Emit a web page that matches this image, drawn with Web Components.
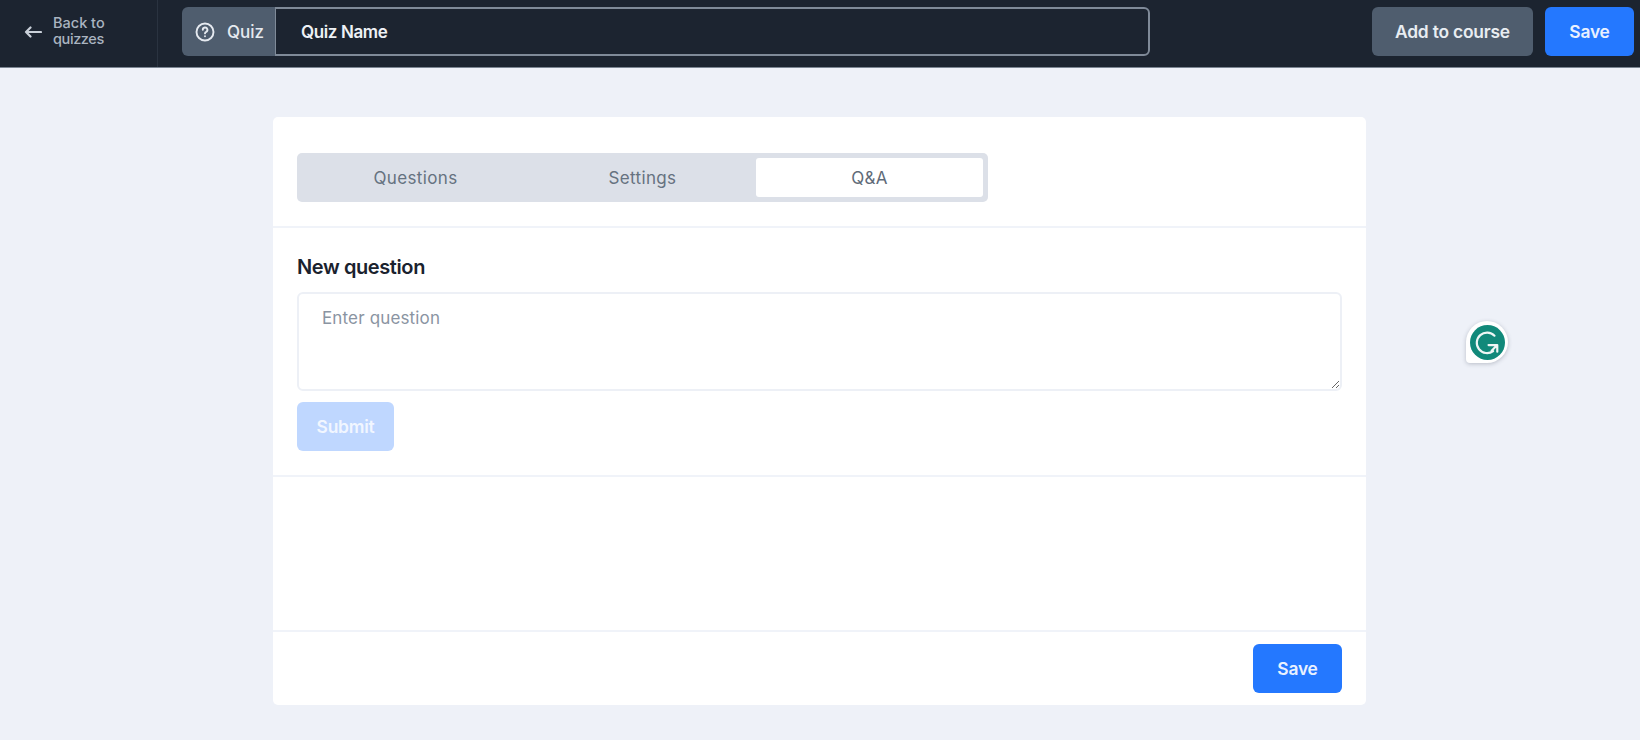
<!DOCTYPE html>
<html lang="en">
<head>
<meta charset="utf-8">
<title>Quiz</title>
<style>
html,body{margin:0;height:100%;background:#eef1f8;font-family:Inter,"Liberation Sans",sans-serif;overflow:hidden}
body{display:flex;flex-direction:column;height:740px;position:relative}
</style>
</head>
<body>
<quiz-header></quiz-header>
<quiz-page>
  <quiz-card>
    <card-section slot="tabs" pad="36px 24px 24px">
      <tab-bar>
        <tab-item>Questions</tab-item>
        <tab-item>Settings</tab-item>
        <tab-item active>Q&amp;A</tab-item>
      </tab-bar>
    </card-section>
    <card-section slot="form" pad="26px 24px 24px">
      <question-form></question-form>
    </card-section>
    <card-section slot="footer" pad="12px 24px 12px">
      <div style="display:flex;justify-content:flex-end"><ui-button variant="primary" style="width:89px">Save</ui-button></div>
    </card-section>
  </quiz-card>
</quiz-page>
<grammarly-badge></grammarly-badge>

<script>
const define = (name, css, html, init) => {
  customElements.define(name, class extends HTMLElement {
    constructor() {
      super();
      this.attachShadow({ mode: 'open' }).innerHTML = `<style>${css}</style>${html}`;
    }
    connectedCallback() { if (init) init(this); }
  });
};

define('ui-button', `
  :host{display:inline-flex;box-sizing:border-box;height:49px;align-items:center;justify-content:center;border-radius:6px;
    font-size:17.4px;font-weight:600;letter-spacing:-.2px;color:#fff;background:#2478ff;flex:none}
  :host([variant=primary]){background:#2478ff;color:#e9f1ff}
  :host([variant=muted]){background:#4f5d6e;color:#e9edf2}
  :host([variant=disabled]){background:#bfd7ff;color:#f1f6ff}
`, `<slot></slot>`);

define('quiz-header', `
  :host{display:flex;align-items:stretch;box-sizing:border-box;height:68px;background:#1c2430;border-bottom:1px solid #7b8592;flex:none;color:#fff}
  .back{display:flex;align-items:center;box-sizing:border-box;width:158px;border-right:1px solid #2a3340;padding:0 0 4px 24px;gap:11px;color:#aab4c0}
  .back svg{flex:none}
  .back span{font-size:14.5px;line-height:16px;letter-spacing:0;font-weight:500;margin-top:-2px}
  .back i{font-style:normal;letter-spacing:-.4px}
  .main{display:flex;flex:1;align-items:flex-start;padding:7px 6px 0 24px;box-sizing:border-box}
  .chip{display:flex;align-items:center;box-sizing:border-box;width:93px;height:49px;background:#4f5d6e;border-radius:6px 0 0 6px;padding-left:13px;gap:12px;font-size:17px;font-weight:500;color:#e6eaf0}
  .name{box-sizing:border-box;width:875px;height:49px;border:2px solid #7f8a98;border-left-width:1px;border-radius:0 6px 6px 0;display:flex;align-items:center;padding-left:25px;font-size:17px;font-weight:600;letter-spacing:-.4px;color:#eef1f5;background:#1c2430}
  .spacer{flex:1}
  .actions{display:flex;gap:12px}
`, `
  <div class="back">
    <svg width="18" height="14" viewBox="0 0 18 14" fill="none" stroke="#c9d0d9" stroke-width="2.2" stroke-linecap="round" stroke-linejoin="round"><path d="M17 7H2M6.5 2.5 2 7l4.5 4.5"/></svg>
    <span>Back to<br><i>quizzes</i></span>
  </div>
  <div class="main">
    <div class="chip">
      <svg width="20" height="20" viewBox="0 0 20 20" fill="none" stroke="#e6eaf0" stroke-width="1.9" stroke-linecap="round" stroke-linejoin="round"><circle cx="10" cy="10" r="8.5"/><path d="M7.8 7.8a2.3 2.3 0 1 1 3.4 2c-.8.4-1.2.8-1.2 1.6"/><path d="M10 14.2v.1"/></svg>
      <span>Quiz</span>
    </div>
    <div class="name">Quiz Name</div>
    <div class="spacer"></div>
    <div class="actions">
      <ui-button variant="muted" style="width:161px">Add to course</ui-button>
      <ui-button variant="primary" style="width:89px">Save</ui-button>
    </div>
  </div>
`);

define('quiz-page', `
  :host{display:flex;justify-content:flex-start;flex:1;padding:49px 0 35px 273px;box-sizing:border-box;min-height:0}
`, `<slot></slot>`);

define('quiz-card', `
  :host{display:flex;flex-direction:column;width:1093px;background:#fff;border-radius:5px;overflow:hidden}
  .grow{flex:1;border-top:2px solid #f0f3f9;border-bottom:2px solid #f0f3f9}
  .b{border-top:2px solid #f0f3f9}
`, `
  <slot name="tabs"></slot>
  <div class="b"><slot name="form"></slot></div>
  <div class="grow"></div>
  <slot name="footer"></slot>
`);

define('card-section', `:host{display:block}`, `<div id="w"><slot></slot></div>`, el => {
  el.shadowRoot.getElementById('w').style.padding = el.getAttribute('pad');
});

define('tab-bar', `
  :host{display:grid;grid-template-columns:repeat(3,1fr);box-sizing:border-box;width:691px;height:49px;padding:5px;background:#dce0e8;border-radius:5px}
`, `<slot></slot>`);

define('tab-item', `
  :host{display:flex;align-items:center;justify-content:center;font-size:17px;letter-spacing:.35px;color:#667280;border-radius:3px}
  :host([active]){background:#fff;color:#5f6b78}
`, `<slot></slot>`);

define('question-form', `
  :host{display:flex;flex-direction:column;align-items:flex-start}
  h2{margin:0 0 12px;font-size:20px;line-height:26px;font-weight:600;letter-spacing:-.4px;color:#1a222e}
  .box{box-sizing:border-box;align-self:stretch;width:100%;height:99px;border:2px solid #edf0f6;border-radius:6px;padding:12px 23px;font-size:17px;letter-spacing:.15px;line-height:24px;color:#8a94a2;resize:vertical;overflow:auto;margin-bottom:11px}
`, `
  <h2>New question</h2>
  <div class="box">Enter question</div>
  <ui-button variant="disabled" style="width:97px">Submit</ui-button>
`);

define('grammarly-badge', `
  :host{position:absolute;left:1466px;top:321px;width:42px;height:42px;border-radius:50% 50% 50% 4px;background:#fff;box-shadow:0 1px 4px rgba(60,70,90,.3);display:flex;align-items:center;justify-content:center}
`, `
  <svg width="35" height="35" viewBox="0 0 34 34" fill="none">
    <circle cx="17" cy="17" r="17" fill="#11897a"/>
    <path d="M23.8 10.4A10 10 0 1 0 22.5 25.4" stroke="#eef6f5" stroke-width="2.1" stroke-linecap="round"/>
    <path d="M18 19.5H26.5V26M26.5 19.5 21 25" stroke="#eef6f5" stroke-width="2.1" stroke-linecap="round" stroke-linejoin="round"/>
  </svg>
`);
</script>
</body>
</html>
